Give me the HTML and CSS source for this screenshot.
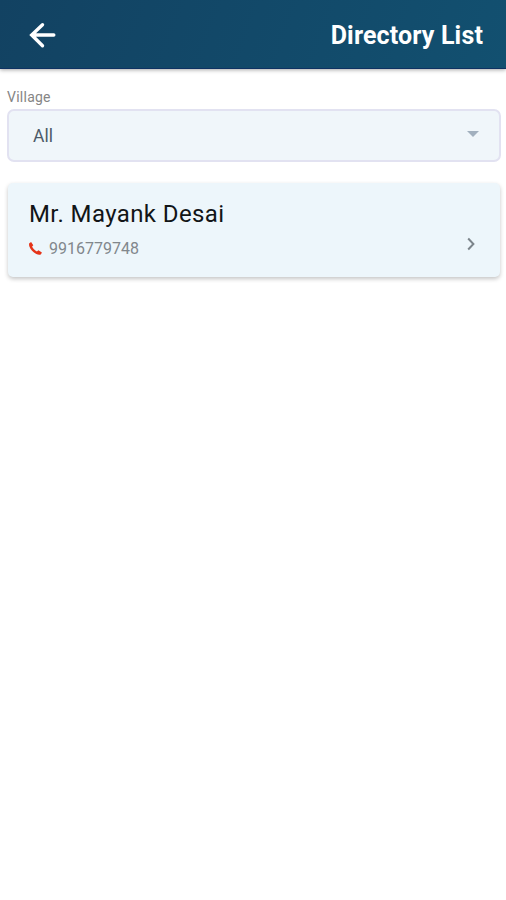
FILE: index.html
```html
<!DOCTYPE html>
<html lang="en">
<head>
<meta charset="utf-8">
<title>Directory List</title>
<link rel="stylesheet" href="styles.css">
</head>
<body>
<header class="bar">
  <svg class="back" viewBox="0 0 28 28" width="28" height="28"><path d="M25.800 14H4M14.500 3.700L3.700 14l10.800 10.800"/></svg>
  <h1 class="title">Directory List</h1>
</header>
<main class="content">
  <label class="label">Village</label>
  <div class="select">
    <span class="value">All</span>
    <svg class="caret" viewBox="0 0 12 6" width="12" height="6"><path d="M0 0h12L6 6z"/></svg>
  </div>
  <article class="card">
    <div class="info">
      <h2 class="name">Mr. Mayank Desai</h2>
      <div class="phone">
        <svg class="handset" viewBox="0 0 13 13" width="13" height="13"><path d="M.3 1.300L2.100 0 4.300 3.200 3.100 4.600C3.900 6.500 5.700 8.500 7.900 9.500L9.400 8.200l3.500 2.400-.9 1.700c-1 .8-2.900.7-4.700-.2C4.100 10.400 1.500 7.500.4 4.500 0 3.200-.1 2 .3 1.300z"/></svg>
        <span>9916779748</span>
      </div>
    </div>
    <svg class="chevron" viewBox="0 0 8 14" width="8" height="14"><path d="M1.200 1.500L6.400 7l-5.200 5.500"/></svg>
  </article>
</main>
</body>
</html>
```

FILE: styles.css
```css
* { box-sizing: border-box; }
body { margin: 0; min-height: 100vh; background: #fff; font-family: Roboto, sans-serif; }
.bar {
  height: 69px;
  padding: 2px 23px 0 28px;
  display: flex;
  align-items: center;
  justify-content: space-between;
  border-bottom: 1px solid #0e3262;
  background: linear-gradient(110deg, #124262, #125070);
  box-shadow: 0 1px 4px rgba(0, 0, 0, .35);
}
.back { fill: none; stroke: #fff; stroke-width: 3.400; stroke-linecap: round; }
.title { margin: 0; padding-top: 2px; color: #fff; font-size: 25px; line-height: 28px; font-weight: 700; letter-spacing: .15px; }
.content { padding: 20px 5px 30px 7px; }
.label { display: block; font-size: 14px; line-height: 16px; color: #858585; letter-spacing: .25px; margin-bottom: 4px; }
.select {
  height: 53px;
  padding: 0 21px 4px 25px;
  display: flex;
  align-items: center;
  justify-content: space-between;
  border: 2px solid #e2e2f1;
  border-radius: 7px;
  background: #f0f6fa;
}
.value { margin-left: -1px; padding-top: 4px; font-size: 17.500px; line-height: 20px; color: #4c5a68; }
.caret { margin-right: -1px; fill: #a2b0be; }
.card {
  margin: 21px 1px 0;
  height: 94px;
  padding: 17px 25px 0 21px;
  display: flex;
  justify-content: space-between;
  border-radius: 5px;
  background: #edf6fb;
  box-shadow: 0 2px 4px rgba(0, 0, 0, .23);
}
.name { margin: 0; font-size: 24px; line-height: 28px; font-weight: 400; color: #121517; letter-spacing: .4px; }
.phone { display: flex; align-items: center; gap: 7px; margin-top: 10px; font-size: 16px; line-height: 20px; color: #81878c; }
.phone span { padding-top: 1px; }
.handset { fill: #e53419; }
.chevron { margin-top: 37px; fill: none; stroke: #7c858b; stroke-width: 2; }
```
